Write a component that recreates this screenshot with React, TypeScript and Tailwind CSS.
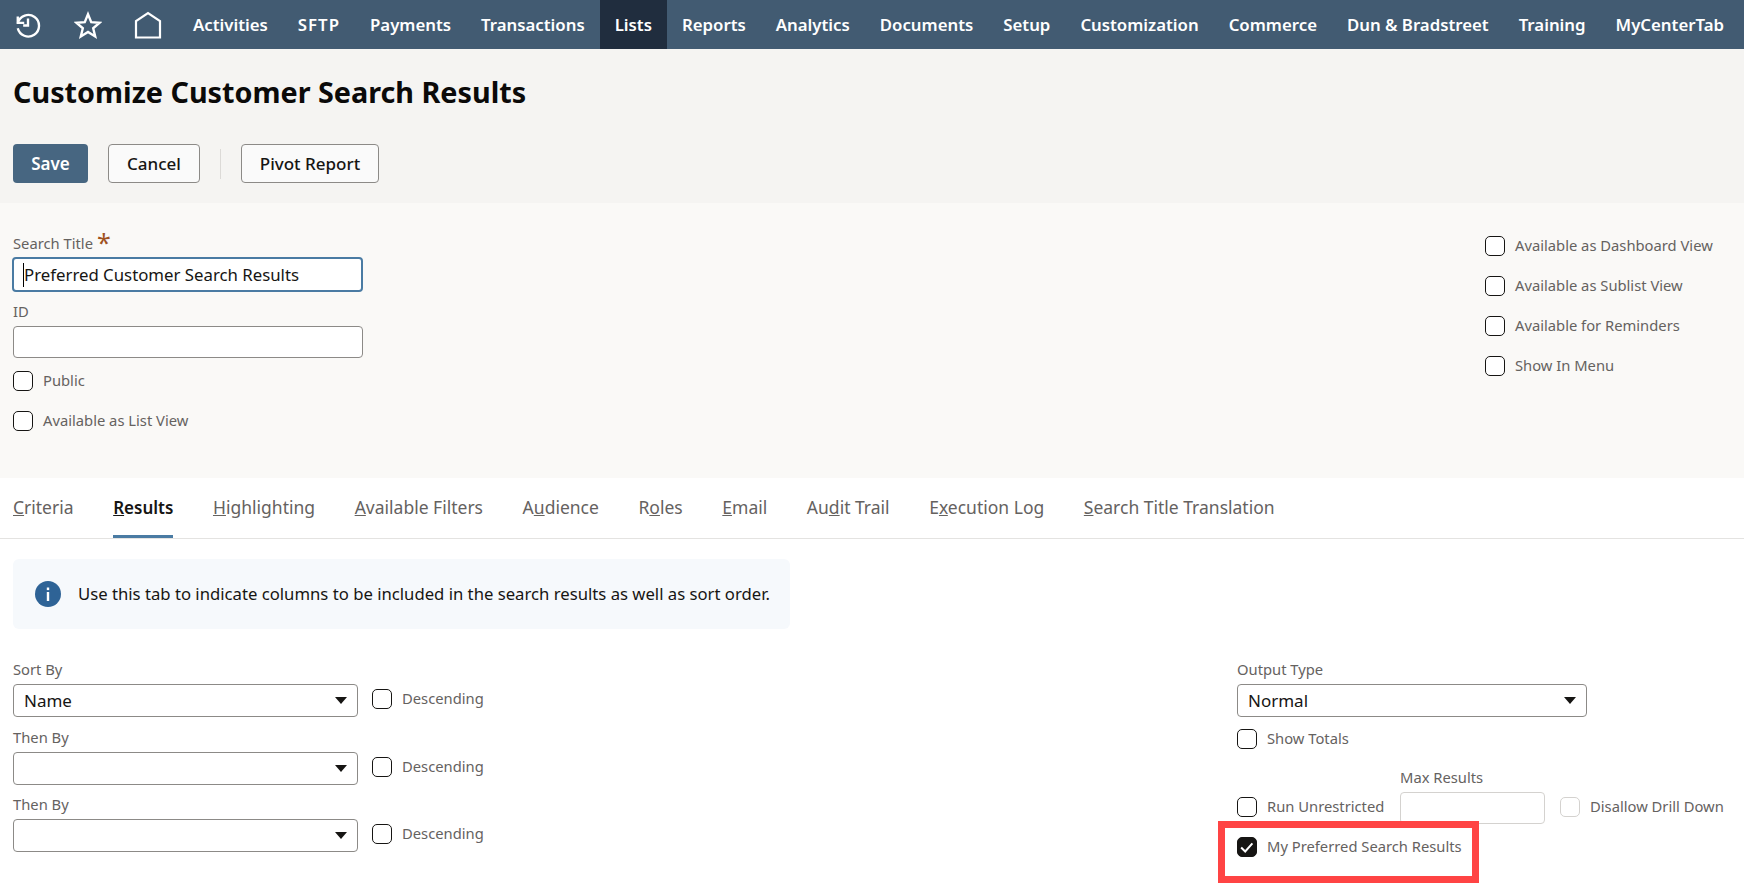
import React from "react";

const nav = ["Activities","SFTP","Payments","Transactions","Lists","Reports","Analytics","Documents","Setup","Customization","Commerce","Dun & Bradstreet","Training","MyCenterTab"];

const tabs: [string,string,string,boolean?][] = [
  ["","C","riteria"],["","R","esults",true],["","H","ighlighting"],["","A","vailable Filters"],["A","u","dience"],["R","o","les"],["","E","mail"],["Au","d","it Trail"],["E","x","ecution Log"],["","S","earch Title Translation"],
];

function Check({ label, checked, disabled }: { label: string; checked?: boolean; disabled?: boolean }) {
  return (
    <div className="flex items-center gap-[10px] h-5">
      <span className={`w-5 h-5 rounded-[5px] border flex items-center justify-center shrink-0 ${checked ? "bg-[#161513] border-[#161513]" : disabled ? "bg-white border-[#d4d2cf]" : "bg-white border-[#161513]"}`}>
        {checked && (
          <svg viewBox="0 0 20 20" className="w-5 h-5"><path d="M3.5 10.5 L8 15 L16 6" fill="none" stroke="white" strokeWidth="2.2" /></svg>
        )}
      </span>
      <span className="text-[14.75px] leading-5 text-[#65625f] whitespace-nowrap -mt-[3px]">{label}</span>
    </div>
  );
}

function Select({ value, w }: { value?: string; w: string }) {
  return (
    <div className={`${w} h-[33px] rounded-[4px] border border-[#8c8a87] bg-white flex items-center justify-between pl-[10px] pr-[10px] text-[17px] text-[#161513]`}>
      <span>{value}</span>
      <span className="w-0 h-0 border-l-[6px] border-r-[6px] border-t-[7px] border-l-transparent border-r-transparent border-t-[#161513]" />
    </div>
  );
}

function SortRow({ label, value, mt }: { label: string; value?: string; mt: string }) {
  return (
    <div className={mt}>
      <div className="text-[14.75px] leading-[18px] text-[#65625f] h-[24px]">{label}</div>
      <div className="flex items-start gap-[14px]">
        <Select value={value} w="w-[345px]" />
        <div className="pt-[5px]"><Check label="Descending" /></div>
      </div>
    </div>
  );
}

export default function App() {
  return (
    <div className="w-[1744px] h-[883px] overflow-hidden relative bg-white font-['Noto_Sans',sans-serif]">
      <nav className="h-[49px] bg-[#425b72] flex items-center text-white">
        <div className="flex items-center pl-[14px] w-[178px] shrink-0 gap-[32px]">
          <svg viewBox="0 0 26 26" className="w-[28px] h-[28px]" fill="none" stroke="white" strokeWidth="2.2">
            <path d="M3.5 5v6h6" />
            <path d="M3.6 11A10 10 0 1 1 3.5 16" />
            <path d="M13 7v6.5H8.5" />
          </svg>
          <svg viewBox="0 0 26 26" className="w-[28px] h-[28px]" fill="none" stroke="white" strokeWidth="2.2" strokeLinejoin="miter">
            <path d="M13 3l3 7.3 7.8.6-6 5.1 1.9 7.6L13 19.5l-6.7 4.1 1.9-7.6-6-5.1 7.8-.6z" />
          </svg>
          <svg viewBox="0 0 28 28" className="w-[28px] h-[28px]" fill="none" stroke="white" strokeWidth="2.2">
            <path d="M2 26.5V10L14 2l12 8v16.5z" />
          </svg>
        </div>
        <div className="flex items-stretch h-full">
          {nav.map(n => (
            <div key={n} className={`flex items-center px-[15px] text-[16.8px] font-semibold whitespace-nowrap ${n === "Lists" ? "bg-[#202d3e]" : ""} ${n === "SFTP" ? "tracking-[1px]" : ""}`}>{n}</div>
          ))}
        </div>
      </nav>

      <header className="h-[154px] bg-[#f5f4f2] px-[13px]">
        <h1 className="pt-[21px] text-[28.75px] leading-[44px] font-bold text-[#0b0a09]">Customize Customer Search Results</h1>
        <div className="flex items-center mt-[30px] text-[17px]">
          <button className="h-[39px] w-[75px] rounded-[4px] bg-[#476681] text-white font-semibold">Save</button>
          <button className="h-[39px] w-[92px] ml-5 rounded-[4px] border border-[#8c8a87] bg-[#fafafa] text-[#161513] font-medium">Cancel</button>
          <span className="h-[30px] w-px bg-[#dcdad7] ml-5" />
          <button className="h-[39px] w-[138px] ml-5 rounded-[4px] border border-[#8c8a87] bg-[#fafafa] text-[#161513] font-medium">Pivot Report</button>
        </div>
      </header>

      <section className="h-[275px] bg-[#faf9f7] px-[13px] flex justify-between">
        <div className="pt-[29px] w-[350px]">
          <div className="h-[25px] flex items-start text-[14.75px] leading-[22px] text-[#65625f]">Search Title <span className="ml-1 text-[25px] text-[#a0521f] leading-[20px]">*</span></div>
          <div className="h-[35px] -ml-px w-[351px] rounded-[4px] border-2 border-[#4a7ba3] bg-white flex items-center pl-[9px] text-[16.8px] text-[#161513]"><span className="border-l border-black leading-[24px]">Preferred Customer Search Results</span></div>
          <div className="mt-[9px] h-[25px] text-[14.75px] leading-5 text-[#65625f]">ID</div>
          <div className="h-[32px] rounded-[4px] border border-[#8c8a87] bg-white" />
          <div className="mt-[13px] flex flex-col gap-5">
            <Check label="Public" />
            <Check label="Available as List View" />
          </div>
        </div>
        <div className="pt-[33px] w-[246px] flex flex-col gap-5">
          <Check label="Available as Dashboard View" />
          <Check label="Available as Sublist View" />
          <Check label="Available for Reminders" />
          <Check label="Show In Menu" />
        </div>
      </section>

      <div className="h-[61px] border-b border-[#e4e3e1] flex items-end px-[13px] gap-[39.6px] text-[17.5px] text-[#65625f]">
        {tabs.map(([a,u,b,active]) => (
          <div key={u+b} className={`h-[57px] leading-[53px] whitespace-nowrap ${active ? "border-b-[3px] border-[#4a7ba3] text-[#161513] text-[17px] font-semibold" : ""}`}>
            {a}<span className="underline">{u}</span>{b}
          </div>
        ))}
      </div>

      <div className="px-[13px] pt-5">
        <div className="w-[777px] h-[70px] rounded-[6px] bg-[#f6f9fc] flex items-center pl-[22px] gap-[17px] text-[16.7px] text-[#161513]">
          <svg viewBox="0 0 26 26" className="w-[26px] h-[26px]">
            <circle cx="13" cy="13" r="13" fill="#2e6396" />
            <rect x="11.8" y="11" width="2.4" height="9" fill="white" />
            <rect x="11.8" y="6.5" width="2.4" height="2.6" fill="white" />
          </svg>
          <span className="whitespace-nowrap">Use this tab to indicate columns to be included in the search results as well as sort order.</span>
        </div>

        <div className="flex justify-between pt-[31px]">
          <div>
            <SortRow label="Sort By" value="Name" mt="" />
            <SortRow label="Then By" mt="mt-[11px]" />
            <SortRow label="Then By" mt="mt-[10px]" />
          </div>
          <div className="w-[494px]">
            <div className="text-[14.75px] leading-[18px] text-[#65625f] h-[24px]">Output Type</div>
            <Select value="Normal" w="w-[350px]" />
            <div className="mt-3"><Check label="Show Totals" /></div>
            <div className="flex items-end mt-[19px]">
              <div className="w-[163px] pb-[7px]"><Check label="Run Unrestricted" /></div>
              <div>
                <div className="text-[14.75px] leading-[18px] text-[#65625f] h-[24px]">Max Results</div>
                <div className="w-[145px] h-[32px] rounded-[4px] border border-[#d4d2cf] bg-white" />
              </div>
              <div className="ml-[15px] pb-[7px]"><Check label="Disallow Drill Down" disabled /></div>
            </div>
            <div className="mt-[13px]"><Check label="My Preferred Search Results" checked /></div>
          </div>
        </div>
      </div>

      <div className="absolute left-[1218px] top-[821px] w-[261px] h-[62px] border-[7px] border-[#ff4444]" />
    </div>
  );
}
